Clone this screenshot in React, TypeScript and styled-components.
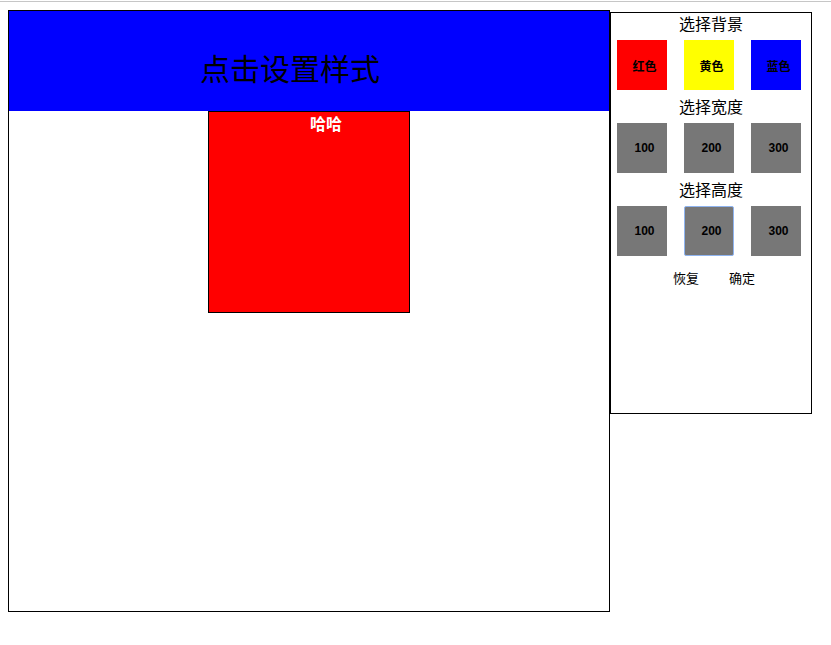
import React from "react";
import styled, { createGlobalStyle } from "styled-components";

const Global = createGlobalStyle`
  html, body { margin: 0; padding: 0; background: #fff; }
  body { font-family: "Liberation Sans", "Noto Sans CJK SC", sans-serif; }
`;

const TopLine = styled.div`
  height: 1px;
  margin-top: 1px;
  background: #c6c6c6;
`;

const Page = styled.div`
  display: flex;
  align-items: flex-start;
  padding: 8px 0 0 8px;
`;

const Stage = styled.div`
  width: 600px;
  height: 600px;
  border: 1px solid #000;
  background: #fff;
`;

const Header = styled.div`
  height: 100px;
  box-sizing: border-box;
  background: #0000ff;
  color: #000;
  font-size: 30px;
  line-height: 30px;
  padding: 41px 0 0 191px;
  font-family: "Noto Sans CJK SC", sans-serif;
`;

const Target = styled.div<{ $bg: string; $w: number; $h: number }>`
  width: ${(p) => p.$w}px;
  height: ${(p) => p.$h}px;
  margin: 0 auto;
  border: 1px solid #000;
  background: ${(p) => p.$bg};
  color: #fff;
  font-weight: bold;
  font-size: 16px;
  line-height: 20px;
  padding-top: 1px;
  box-sizing: content-box;
  text-indent: 101px;
  font-family: "Noto Sans CJK SC", sans-serif;
`;

const Panel = styled.div`
  width: 200px;
  margin-top: 2px;
  border: 1px solid #000;
  padding-top: 2px;
  box-sizing: content-box;
  height: 398px;
`;

const Title = styled.div`
  text-align: center;
  font-size: 16px;
  line-height: 16px;
  margin-bottom: 9px;
  font-family: "Noto Sans CJK SC", sans-serif;
`;

const Row = styled.div`
  display: flex;
  gap: 17px;
  padding-left: 6px;
  margin-bottom: 8px;
`;

const Choice = styled.button<{ $bg: string; $focused?: boolean }>`
  width: 50px;
  height: 50px;
  box-sizing: border-box;
  padding: 0 0 0 5px;
  margin: 0;
  border: ${(p) => (p.$focused ? "1px solid #8fb4f0" : "none")};
  border-radius: ${(p) => (p.$focused ? "2px" : "0")};
  background: ${(p) => p.$bg};
  color: #000;
  font-family: "Liberation Sans", "Noto Sans CJK SC", sans-serif;
  font-weight: bold;
  font-size: 12px;
  cursor: pointer;
`;

const Actions = styled.div`
  display: flex;
  justify-content: center;
  gap: 30px;
  padding-left: 6px;
  margin-top: 13px;
`;

const TextButton = styled.button`
  background: none;
  border: none;
  padding: 0;
  font-size: 13px;
  line-height: 18px;
  color: #000;
  font-family: "Noto Sans CJK SC", sans-serif;
  cursor: pointer;
`;

const colors = [
  { label: "红色", value: "#ff0000" },
  { label: "黄色", value: "#ffff00" },
  { label: "蓝色", value: "#0000ff" },
];
const sizes = [100, 200, 300];

export default function App() {
  return (
    <>
      <Global />
      <TopLine />
      <Page>
        <Stage>
          <Header>点击设置样式</Header>
          <Target $bg="#ff0000" $w={200} $h={199}>
            哈哈
          </Target>
        </Stage>
        <Panel>
          <Title>选择背景</Title>
          <Row>
            {colors.map((c) => (
              <Choice key={c.label} $bg={c.value}>
                {c.label}
              </Choice>
            ))}
          </Row>
          <Title>选择宽度</Title>
          <Row>
            {sizes.map((s) => (
              <Choice key={s} $bg="#777777">
                {s}
              </Choice>
            ))}
          </Row>
          <Title>选择高度</Title>
          <Row>
            {sizes.map((s) => (
              <Choice key={s} $bg="#777777" $focused={s === 200}>
                {s}
              </Choice>
            ))}
          </Row>
          <Actions>
            <TextButton>恢复</TextButton>
            <TextButton>确定</TextButton>
          </Actions>
        </Panel>
      </Page>
    </>
  );
}
